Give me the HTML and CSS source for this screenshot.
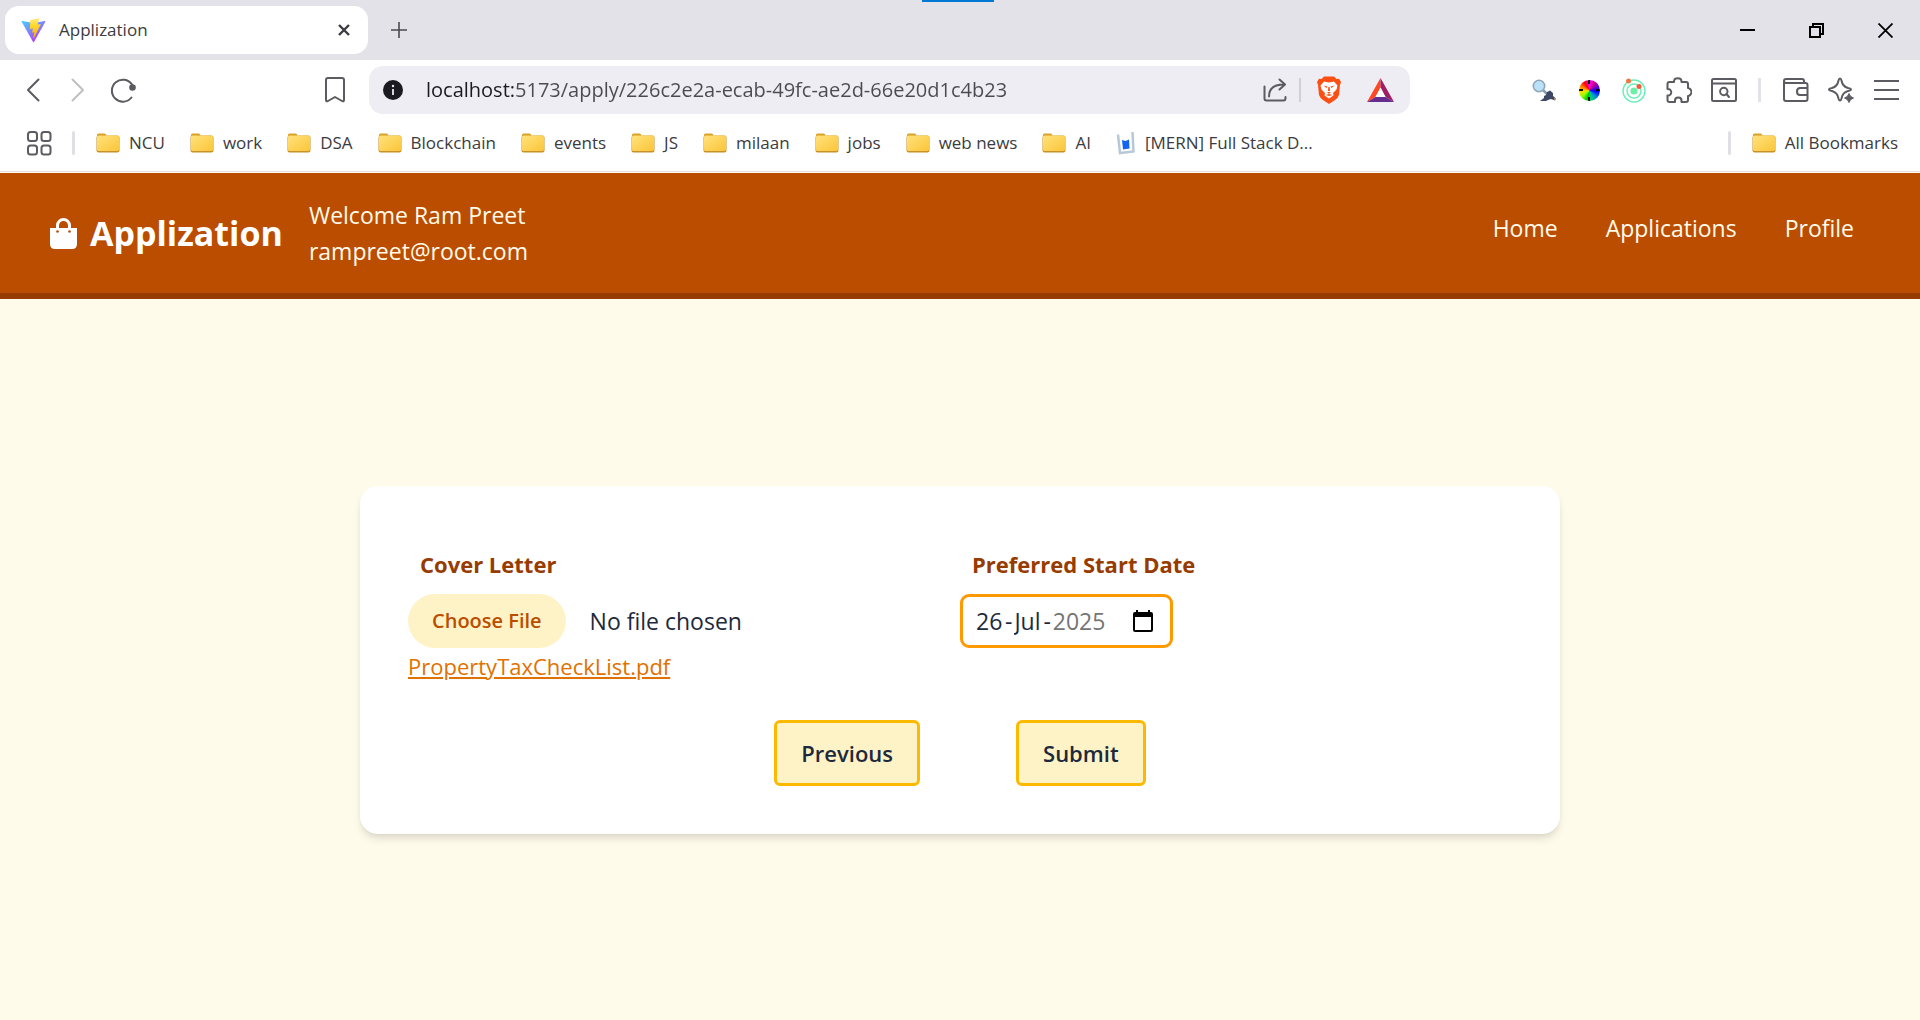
FILE: index.html
```html
<!DOCTYPE html>
<html lang="en">
<head>
<meta charset="utf-8">
<title>Applization</title>
<link rel="stylesheet" href="styles.css">
</head>
<body>
<svg class="defs" width="0" height="0" aria-hidden="true">
  <defs>
    <linearGradient id="folder-face" x1="0" y1="0" x2="1" y2="1"><stop offset="0" stop-color="#ffe27a"/><stop offset="1" stop-color="#fbc53a"/></linearGradient>
    <linearGradient id="vite-body" x1="0" y1="0" x2=".7" y2="1"><stop offset="0" stop-color="#41d1ff"/><stop offset="1" stop-color="#bd34fe"/></linearGradient>
    <linearGradient id="vite-bolt" x1="0" y1="0" x2="0" y2="1"><stop offset="0" stop-color="#ffea83"/><stop offset=".3" stop-color="#ffdd35"/><stop offset="1" stop-color="#ffa800"/></linearGradient>
    <symbol id="folder" viewBox="0 0 24 20">
      <path d="M1 4V2Q1 .5 2.500 .5H8.500Q9.500 .5 10 1.500L10.500 3V6H1z" fill="#d9a125"/>
      <rect x=".5" y="2.500" width="23" height="17" rx="2" fill="#c8922a"/>
      <rect x="1" y="2.500" width="22" height="15.500" rx="1.500" fill="url(#folder-face)"/>
    </symbol>
  </defs>
</svg>

<div class="browser">
  <div class="tabstrip">
    <div class="tab">
      <svg width="25" height="25" viewBox="0 0 410 404" aria-hidden="true"><path d="M399.600 59.500 215.600 388.500c-3.800 6.800-13.600 6.900-17.400.100L10.600 59.600c-4.200-7.300 2-16.200 10.300-14.700l184.200 32.900c1.200.2 2.400.2 3.500 0l180.300-32.900c8.300-1.500 14.600 7.300 10.700 14.600z" fill="url(#vite-body)"/><path d="M293 1.600 156.800 28.200c-2.200.4-3.900 2.300-4 4.600l-8.400 141.500c-.2 3.300 2.900 5.900 6.100 5.200l37.900-8.800c3.600-.8 6.800 2.300 6 5.900l-11.300 55.100c-.8 3.700 2.700 6.900 6.300 5.800l23.400-7.100c3.600-1.100 7.100 2.100 6.300 5.800l-17.900 86.600c-1.100 5.400 6.100 8.400 9.100 3.700l2-3.100 110.900-221.300c1.900-3.700-1.300-7.900-5.400-7.100l-39 7.500c-3.700.7-6.800-2.700-5.700-6.300l25.400-88.200c1.100-3.600-2-7.100-5.600-6.300z" fill="url(#vite-bolt)"/></svg>
      <span class="tab-title">Applization</span>
      <button class="tab-close" aria-label="Close tab"><svg width="12" height="12" viewBox="0 0 12 12"><path d="M1 1 11 11M11 1 1 11" stroke="#3b3b40" stroke-width="2.400" fill="none"/></svg></button>
    </div>
    <button class="new-tab" aria-label="New tab"><svg width="16" height="16" viewBox="0 0 16 16"><path d="M8 0V16M0 8H16" stroke="#4a4a50" stroke-width="1.600"/></svg></button>
    <span class="loading-strip"></span>
    <div class="window-controls">
      <button aria-label="Minimize"><svg width="15" height="15" viewBox="0 0 15 15"><path d="M0 7H15" stroke="#000" stroke-width="2"/></svg></button>
      <button aria-label="Restore"><svg width="15" height="15" viewBox="0 0 15 15"><path d="M1 4H11V14H1zM4 4V1H14V11H11" fill="none" stroke="#000" stroke-width="2"/></svg></button>
      <button aria-label="Close window"><svg width="15" height="15" viewBox="0 0 15 15"><path d="M.5 .5 14.500 14.500M14.500 .5 .5 14.500" stroke="#000" stroke-width="1.800"/></svg></button>
    </div>
  </div>

  <div class="toolbar">
    <div class="nav-buttons">
      <button class="icon" aria-label="Back"><svg width="14" height="24" viewBox="0 0 14 24"><path d="M12.500 1.500 2 12 12.500 22.500" class="line"/></svg></button>
      <button class="icon dim" aria-label="Forward"><svg width="14" height="24" viewBox="0 0 14 24"><path d="M1.500 1.500 12 12 1.500 22.500" class="line"/></svg></button>
      <button class="icon" aria-label="Reload"><svg width="26" height="26" viewBox="0 0 26 26"><path d="M21.500 20.500A11 11 0 1 1 22 7.500" class="line"/><circle cx="22.500" cy="10.500" r="3.300" fill="currentColor"/></svg></button>
      <button class="icon push" aria-label="Bookmark this page"><svg width="20" height="26" viewBox="0 0 20 26"><path d="M1 3Q1 1 3 1H17Q19 1 19 3V23Q19 25 17 24L10 20 3 24Q1 25 1 23z" class="line"/></svg></button>
    </div>
    <div class="address">
      <svg width="20" height="20" viewBox="0 0 20 20" aria-hidden="true"><circle cx="10" cy="10" r="10" fill="#1b1a20"/><path d="M10 9V15" stroke="#ededf3" stroke-width="1.800"/><circle cx="10" cy="6" r="1.200" fill="#ededf3"/></svg>
      <input class="url" aria-label="Address" value="localhost:5173/apply/226c2e2a-ecab-49fc-ae2d-66e20d1c4b23">
      <button class="icon" aria-label="Share"><svg width="24" height="24" viewBox="0 0 24 24"><path d="M1.500 8.500V20.500Q1.500 22.500 3.500 22.500H20.500Q22.500 22.500 22.500 20V19M6 18.500C6 11 11 6.500 21 6.500M16.500 1.500 22 6.500 16.500 11.500" class="line"/></svg></button>
      <span class="divider"></span>
      <button class="icon" aria-label="Brave Shields"><svg width="24" height="28" viewBox="0 0 24 28"><path d="M7 .5H17L19.500 3 22 2.800 24 6 23 9 22 19Q21 22 18 24L12 28 6 24Q3 22 2 19L1 9 0 6 2 2.800 4.500 3z" fill="#fb4f14"/><path d="M7 5.500 12 6.500 17 5.500 20.500 9.500 19.500 13.500 16 17 16.500 19.500 12 22.500 7.500 19.500 8 17 4.500 13.500 3.500 9.500z" fill="#fff"/><path d="M6.500 9.500 10.500 10.500 9.500 12zM17.500 9.500 13.500 10.500 14.500 12zM10 16H14L12 18zM11.300 11H12.700L13 15H11zM8.500 19 12 18 15.500 19 12 20z" fill="#fb4f14"/></svg></button>
      <button class="icon rewards" aria-label="Brave Rewards"><svg width="27" height="24" viewBox="0 0 27 24"><path d="M13.500 0 0 24 8.500 19 13.500 9.500z" fill="#ff4724"/><path d="M13.500 0 27 24 18.500 19 13.500 9.500z" fill="#9e1f63"/><path d="M0 24H27L18.500 19H8.500z" fill="#662d91"/><path d="M13.500 9.500 18.500 19H8.500z" fill="#fff"/></svg></button>
    </div>
    <div class="extensions">
      <button class="icon" aria-label="Inspector extension"><svg width="24" height="23" viewBox="0 0 24 23"><path d="M10 10 15 15" stroke="#8a9bb0" stroke-width="2.500"/><circle cx="7" cy="7" r="5.700" fill="#b9e2f8" stroke="#8fa5b8" stroke-width="1.600"/><path d="M8 22 12 19 12 17 14 16 15 13 18 11.500 21 14 21 17 24 19.500 23 21.500 19 20 16 21 14 22z" fill="#3c4866"/><circle cx="23" cy="20" r="1" fill="#e39a4c"/></svg></button>
      <button class="icon" aria-label="Color picker extension"><span class="wheel"></span></button>
      <button class="icon" aria-label="Orbit extension"><svg width="24" height="25" viewBox="0 0 24 25"><g fill="none" stroke="#68efb6" stroke-width="1.400"><circle cx="12" cy="13" r="11"/><circle cx="12" cy="13" r="7"/></g><circle cx="12" cy="13" r="3.600" fill="#6df0a5"/><circle cx="6.500" cy="3" r="2.500" fill="#f07848"/><circle cx="17" cy="8.500" r="2.500" fill="#ee5a3a"/></svg></button>
      <button class="icon" aria-label="Extensions"><svg width="26" height="26" viewBox="0 0 26 26"><path d="M3.500 5H8V4.500C8 0 15.500 0 15.500 4.500V5H20Q22 5 22 7V11C23.500 11 25.500 13 25.500 15S23.500 19 22 19V23Q22 25 20 25H15.500V23.500C15.500 19.500 9 19.500 9 23.500V25H3.500Q1.500 25 1.500 23V18.500C6.500 19 6.500 11.500 1.500 12V7Q1.500 5 3.500 5z" class="line"/></svg></button>
      <button class="icon" aria-label="Search tabs"><svg width="26" height="24" viewBox="0 0 26 24"><rect x="1" y="1" width="24" height="22" rx="1.500" class="line"/><path d="M1 5.500H25M15.500 16 18 19" class="line"/><circle cx="12.800" cy="13.500" r="3.700" class="line"/></svg></button>
      <span class="gap-divider"></span>
      <button class="icon" aria-label="Wallet"><svg width="26" height="24" viewBox="0 0 26 24"><path d="M21 5V3Q21 1 19 1H3Q1 1 1 3V21Q1 23 3 23H22.500Q24.500 23 24.500 21V7Q24.500 5 22.500 5H3Q1 5 1 3M24.500 10H17Q14 10 14 13.500 14 17 17 17H24.500" class="line"/></svg></button>
      <button class="icon" aria-label="Leo AI"><svg width="26" height="26" viewBox="0 0 26 26"><path d="M12 1.500Q13 1.500 13.500 3.500 14.500 9.500 20 11 23 11.500 23 12.500 23 13.500 20 14 14.500 15.500 13.500 21.500 13 23.500 12 23.500 11 23.500 10.500 21.500 9.500 15.500 4 14 1 13.500 1 12.500 1 11.500 4 11 9.500 9.500 10.500 3.500 11 1.500 12 1.500z" class="line"/><circle cx="21" cy="21" r="5.500" fill="#fff"/><path d="M21 16.500Q22 20 25.500 21 22 22 21 25.500 20 22 16.500 21 20 20 21 16.500z" fill="currentColor" stroke="currentColor"/></svg></button>
      <button class="icon" aria-label="Menu"><svg width="25" height="20" viewBox="0 0 25 20"><path d="M0 1H25M0 10H25M0 19H25" class="line"/></svg></button>
    </div>
  </div>

  <nav class="bookmarks" aria-label="Bookmarks">
    <button class="apps" aria-label="Apps"><svg width="25" height="25" viewBox="0 0 25 25"><g class="line"><rect x="1" y="1" width="9" height="9" rx="2.500"/><rect x="14.500" y="1" width="9" height="9" rx="2.500"/><rect x="1" y="14.500" width="9" height="9" rx="2.500"/><rect x="14.500" y="14.500" width="9" height="9" rx="2.500"/></g></svg></button>
    <span class="bar"></span>
    <a class="mark" href="#"><svg class="folder"><use href="#folder"/></svg>NCU</a>
    <a class="mark" href="#"><svg class="folder"><use href="#folder"/></svg>work</a>
    <a class="mark" href="#"><svg class="folder"><use href="#folder"/></svg>DSA</a>
    <a class="mark" href="#"><svg class="folder"><use href="#folder"/></svg>Blockchain</a>
    <a class="mark" href="#"><svg class="folder"><use href="#folder"/></svg>events</a>
    <a class="mark" href="#"><svg class="folder"><use href="#folder"/></svg>JS</a>
    <a class="mark" href="#"><svg class="folder"><use href="#folder"/></svg>milaan</a>
    <a class="mark" href="#"><svg class="folder"><use href="#folder"/></svg>jobs</a>
    <a class="mark" href="#"><svg class="folder"><use href="#folder"/></svg>web news</a>
    <a class="mark" href="#"><svg class="folder"><use href="#folder"/></svg>AI</a>
    <a class="mark" href="#"><svg width="20" height="24" viewBox="0 0 20 24"><path d="M2 3.500 4 22 17.500 20.500 16.500 1" fill="none" stroke="#b8c8da" stroke-width="2.500"/><path d="M6 9 9.500 10 13 8.500 13.500 17.500 7 18.500z" fill="#1264f0"/></svg>[MERN] Full Stack D...</a>
    <span class="bar end"></span>
    <a class="mark" href="#"><svg class="folder"><use href="#folder"/></svg>All Bookmarks</a>
  </nav>
</div>

<header class="site-header">
  <a class="brand" href="#">
    <svg width="27" height="31" viewBox="0 0 27 31" aria-hidden="true"><path d="M7.500 11V7.500a6 6 0 0 1 12 0V11" fill="none" stroke="#fff" stroke-width="3"/><path d="M0 10H27V26Q27 31 22 31H5Q0 31 0 26z" fill="#fff"/><circle cx="7.500" cy="13.500" r="1.300" fill="#bb4d00"/><circle cx="19.500" cy="13.500" r="1.300" fill="#bb4d00"/></svg>
    Applization
  </a>
  <div class="welcome"><div>Welcome Ram Preet</div><div>rampreet@root.com</div></div>
  <nav class="site-nav">
    <a href="#">Home</a>
    <a href="#">Applications</a>
    <a href="#">Profile</a>
  </nav>
</header>

<main class="page">
  <form class="card">
    <div class="fields">
      <div class="field">
        <label for="cover-letter">Cover Letter</label>
        <input class="file" id="cover-letter" type="file">
        <a class="attachment" href="#">PropertyTaxCheckList.pdf</a>
      </div>
      <div class="field">
        <label for="start-day">Preferred Start Date</label>
        <div class="date">
          <input class="day" id="start-day" value="26"><span>-</span><input class="month" aria-label="Month" value="Jul"><span>-</span><input class="year" aria-label="Year" value="2025">
          <button type="button" class="calendar" aria-label="Show date picker"><svg width="20" height="22" viewBox="0 0 20 22"><path d="M2 2H18Q20 2 20 4V20Q20 22 18 22H2Q0 22 0 20V4Q0 2 2 2zM2 7V20H18V7z" fill="#000" fill-rule="evenodd"/><path d="M3 0H5V3H3zM15 0H17V3H15z" fill="#000"/></svg></button>
        </div>
      </div>
    </div>
    <div class="actions">
      <button type="button">Previous</button>
      <button type="submit">Submit</button>
    </div>
  </form>
</main>
</body>
</html>
```
FILE: styles.css
```css
* { box-sizing: border-box; }

body {
  margin: 0;
  min-height: 100vh;
  display: flex;
  flex-direction: column;
  background: #fffbeb;
  color: #1d293d;
  font: 22px/36px "Open Sans", "Noto Sans", sans-serif;
}

button, input { font: inherit; color: inherit; }
button { padding: 0; border: 0; background: none; }
input { min-width: 0; padding: 0; border: 0; background: none; outline: 0; }
a { color: inherit; text-decoration: none; }
svg { flex: none; display: block; }
.defs { position: absolute; }

.line {
  fill: none;
  stroke: currentColor;
  stroke-width: 2;
  stroke-linecap: round;
  stroke-linejoin: round;
}

/* Browser frame */
.browser {
  background: #fff;
  color: #3b3b40;
  border-bottom: 1px solid #e2dfdc;
  margin-bottom: 1px;
  font-size: 17px;
  line-height: 24px;
}

.tabstrip {
  position: relative;
  display: flex;
  align-items: center;
  height: 60px;
  padding: 0 27px 0 5px;
  background: #e3e2e8;
}

.tab {
  display: flex;
  align-items: center;
  width: 363px;
  height: 48px;
  padding: 0 18px 0 16px;
  border-radius: 14px;
  background: #fff;
}

.tab-title { flex: 1; margin-left: 13px; }
.new-tab { margin-left: 23px; }

.loading-strip {
  position: absolute;
  top: 0;
  left: 48%;
  width: 72px;
  height: 2px;
  background: #0078d4;
}

.window-controls { display: flex; gap: 54px; margin-left: auto; }

.toolbar {
  display: flex;
  align-items: center;
  height: 60px;
  padding: 0 16px 0 15px;
  color: #5b5b61;
}

.icon {
  display: flex;
  align-items: center;
  justify-content: center;
  flex: none;
  width: 36px;
  height: 36px;
}

.dim { color: #c0c0c4; }
.push { margin-left: auto; }
.nav-buttons { display: flex; gap: 9px; width: 338px; }

.address {
  display: flex;
  align-items: center;
  flex: 1;
  height: 48px;
  margin-left: 16px;
  padding: 0 12px 0 14px;
  border-radius: 14px;
  background: #ededf3;
}

.url {
  flex: 1;
  margin-left: 23px;
  font-size: 20px;
  background: linear-gradient(90deg, #1b1a20 89px, #4a4a50 89px);
  -webkit-background-clip: text;
  background-clip: text;
  color: transparent;
}

.divider { width: 2px; height: 24px; margin: 0 10px 0 6px; background: #d0d0d6; }
.rewards { margin-left: 15px; }
.extensions { display: flex; align-items: center; gap: 9px; margin-left: 116px; }

/* Colour wheel with dark marks at the four quarters */
.wheel {
  width: 21px;
  height: 21px;
  border-radius: 50%;
  background:
    linear-gradient(#000, #000) top / 2px 4px no-repeat,
    linear-gradient(#000, #000) bottom / 2px 4px no-repeat,
    linear-gradient(#000, #000) left / 4px 2px no-repeat,
    linear-gradient(#000, #000) right / 4px 2px no-repeat,
    conic-gradient(#f0f, #d0008c, #60c, #00f, #0080e0, #0c8, #0c0, #8f0, #fd0, #f80, #f00, #f0f);
}

.gap-divider { width: 18px; height: 24px; border: solid #fff; border-width: 0 8px 0 7px; background: #e3e2e8; }

.bookmarks {
  display: flex;
  align-items: center;
  height: 51px;
  padding: 0 22px 5px 27px;
}

.bar { width: 3px; height: 24px; margin: 0 21px 0 20px; border-radius: 2px; background: #e0dfe5; }
.end { margin-left: auto; }
.mark { display: flex; align-items: center; gap: 9px; margin-right: 25px; white-space: nowrap; }
.mark:last-child { margin-right: 0; }
.folder { width: 24px; height: 20px; }
.apps { color: #5b5b61; }

/* Site header */
.site-header {
  display: flex;
  padding: 24px 66px 24px 50px;
  border-bottom: 6px solid #973c00;
  background: #bb4d00;
  color: #fffbeb;
  font-size: 23px;
}

.brand {
  display: flex;
  align-items: center;
  gap: 13px;
  color: #fff;
  font-size: 34px;
  font-weight: 700;
}

.welcome { margin-left: 26px; }
.site-nav { display: flex; gap: 48px; margin-left: auto; padding-top: 13px; }

/* Application form */
.page {
  flex: 1;
  display: flex;
  align-items: center;
  justify-content: center;
  padding: 24px;
}

.card {
  width: 100%;
  max-width: 1200px;
  padding: 48px;
  border-radius: 18px;
  background: #fff;
  box-shadow: 0 6px 9px -1px rgb(0 0 0 / 10%), 0 3px 6px -3px rgb(0 0 0 / 10%);
}

.fields { display: grid; grid-template-columns: 1fr 1fr; }
.field { display: flex; flex-direction: column; align-items: flex-start; }
.field label { padding: 12px; color: #973c00; font-weight: 700; }

.file { height: 54px; font-size: 23px; line-height: 54px; }

.file::file-selector-button {
  height: 54px;
  margin: 0 24px 0 0;
  padding: 0 24px;
  border: 0;
  border-radius: 27px;
  background: #fef3c6;
  color: #bb4d00;
  font: 600 20px/54px "Open Sans", "Noto Sans", sans-serif;
  vertical-align: top;
}

.attachment { color: #e17100; text-decoration: underline; }

.date {
  display: flex;
  align-items: center;
  height: 54px;
  padding: 0 17px 0 13px;
  border: 3px solid #fe9a00;
  border-radius: 9px;
  font-size: 23px;
}

.day { width: 27px; }
.month { width: 27px; }
.year { width: 54px; color: #757575; }
.date span { padding: 0 2px; }
.calendar { margin-left: 26px; }

.actions { display: flex; justify-content: center; gap: 96px; margin-top: 36px; }

.actions button {
  height: 66px;
  padding: 0 24px;
  border: 3px solid #fdb900;
  border-radius: 6px;
  background: #fef3c6;
  font-weight: 600;
}
```
